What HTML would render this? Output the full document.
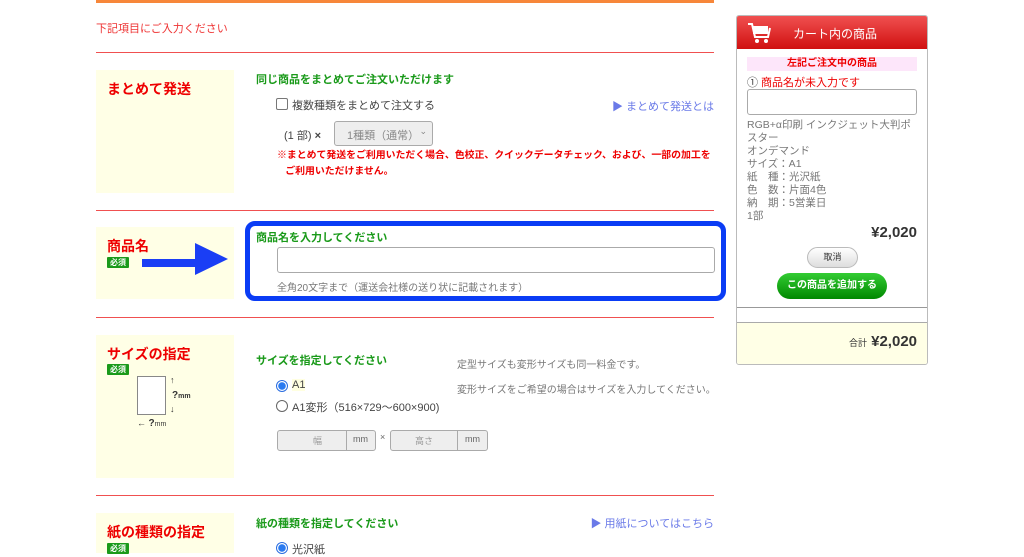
<!DOCTYPE html>
<html><head><meta charset="utf-8"><style>
*{margin:0;padding:0;box-sizing:border-box}
body{width:1024px;height:550px;overflow:hidden;background:#fff;position:relative;font-family:"Liberation Sans","Noto Sans CJK JP",sans-serif;color:#555}
.a{position:absolute;white-space:nowrap}
.hr{position:absolute;left:96px;width:618px;height:1px;background:#f05050}
.yb{position:absolute;left:96px;width:138px;background:#ffffe6}
.t{font-size:14px;font-weight:bold;color:#e00}
.g{font-size:11px;font-weight:bold;color:#1a9a1a}
.req{position:absolute;background:#1a9a1a;color:#fff;font-size:8px;font-weight:bold;padding:0 3px;height:11px;line-height:11px;border-radius:1px}
.s{font-size:11px;color:#444}
.lk{font-size:11px;color:#6a7ae8}
.rd{position:absolute;width:12px;height:12px;border-radius:50%;border:1px solid #666;background:#fff}
.rd.on{border:1px solid #2a6de0;background:radial-gradient(circle,#2a7af0 0 3.5px,#fff 4px)}
.inp{position:absolute;border:1px solid #aaa;border-radius:3px;background:#fff}
</style></head><body>
<div class="a" style="left:96px;top:0;width:618px;height:3px;background:#f7873a"></div>
<div class="a" style="left:96px;top:20px;font-size:11px;color:#e33">下記項目にご入力ください</div>
<div class="hr" style="top:52px"></div>

<div class="yb" style="top:70px;height:123px"></div>
<div class="a t" style="left:107px;top:79px">まとめて発送</div>
<div class="a g" style="left:256px;top:71px">同じ商品をまとめてご注文いただけます</div>
<div class="a" style="left:276px;top:98px;width:12px;height:12px;border:1px solid #777;border-radius:2px;background:#fff"></div>
<div class="a s" style="left:292px;top:97px">複数種類をまとめて注文する</div>
<div class="a lk" style="right:310px;top:98px">▶ まとめて発送とは</div>
<div class="a s" style="left:284px;top:127px">(1 部) <b>×</b></div>
<div class="a" style="left:334px;top:121px;width:99px;height:25px;border:1px solid #aaa;border-radius:3px;background:#eee;font-size:11px;color:#888;padding:5px 0 0 12px">1種類（通常）<span style="position:absolute;right:5px;top:4px;font-size:9px">⌄</span></div>
<div class="a" style="left:277px;top:148px;font-size:9.9px;font-weight:bold;color:#e00;line-height:16px">※まとめて発送をご利用いただく場合、色校正、クイックデータチェック、および、一部の加工を<br>&nbsp;&nbsp;&nbsp;ご利用いただけません。</div>
<div class="hr" style="top:210px"></div>

<div class="yb" style="top:227px;height:72px"></div>
<div class="a t" style="left:107px;top:236px">商品名</div>
<div class="req" style="left:107px;top:257px">必須</div>
<div class="a" style="left:142px;top:259px;width:55px;height:8px;background:#1a3ef5"></div>
<svg class="a" style="left:195px;top:243px" width="33" height="32"><polygon points="0,0 33,16 0,32" fill="#1a3ef5"/></svg>
<div class="a" style="left:245px;top:221px;width:481px;height:80px;border:5px solid #0a3cf5;border-radius:10px"></div>
<div class="a g" style="left:256px;top:229px">商品名を入力してください</div>
<div class="inp" style="left:277px;top:247px;width:438px;height:26px"></div>
<div class="a" style="left:277px;top:279px;font-size:10px;color:#777">全角20文字まで（運送会社様の送り状に記載されます）</div>
<div class="hr" style="top:317px"></div>

<div class="yb" style="top:335px;height:143px"></div>
<div class="a t" style="left:107px;top:344px">サイズの指定</div>
<div class="req" style="left:107px;top:364px">必須</div>
<div class="a" style="left:137px;top:376px;width:29px;height:39px;border:1px solid #888;background:#fff"></div>
<div class="a" style="left:170px;top:375px;font-size:9px;color:#333">↑</div>
<div class="a" style="left:172px;top:390px;font-size:10px;font-weight:bold;color:#333">?<span style="font-size:7px">mm</span></div>
<div class="a" style="left:170px;top:404px;font-size:9px;color:#333">↓</div>
<div class="a" style="left:137px;top:418px;font-size:9px;color:#333">← <b style="font-size:10px">?</b><span style="font-size:7px">mm</span></div>
<div class="a g" style="left:256px;top:352px">サイズを指定してください</div>
<div class="a" style="left:457px;top:356px;font-size:10px;color:#777">定型サイズも変形サイズも同一料金です。</div>
<div class="a" style="left:457px;top:381px;font-size:10px;color:#777">変形サイズをご希望の場合はサイズを入力してください。</div>
<div class="rd on" style="left:276px;top:380px"></div>
<div class="a s" style="left:292px;top:379px;background:#ffffe0">A1</div>
<div class="rd" style="left:276px;top:400px"></div>
<div class="a s" style="left:292px;top:399px">A1変形（516×729〜600×900)</div>
<div class="inp" style="left:277px;top:430px;width:99px;height:21px;background:#eee"></div>
<div class="a" style="left:346px;top:430px;width:1px;height:21px;background:#aaa"></div>
<div class="a" style="left:313px;top:434px;font-size:9px;color:#999">幅</div>
<div class="a" style="left:353px;top:434px;font-size:9px;color:#666">mm</div>
<div class="a" style="left:380px;top:432px;font-size:9px;color:#666">×</div>
<div class="inp" style="left:390px;top:430px;width:98px;height:21px;background:#eee"></div>
<div class="a" style="left:457px;top:430px;width:1px;height:21px;background:#aaa"></div>
<div class="a" style="left:415px;top:434px;font-size:9px;color:#999">高さ</div>
<div class="a" style="left:465px;top:434px;font-size:9px;color:#666">mm</div>
<div class="hr" style="top:495px"></div>

<div class="yb" style="top:513px;height:40px"></div>
<div class="a t" style="left:107px;top:522px">紙の種類の指定</div>
<div class="req" style="left:107px;top:543px">必須</div>
<div class="a g" style="left:256px;top:515px">紙の種類を指定してください</div>
<div class="a lk" style="right:310px;top:515px">▶ 用紙についてはこちら</div>
<div class="rd on" style="left:276px;top:542px"></div>
<div class="a s" style="left:292px;top:541px">光沢紙</div>

<!-- cart -->
<div class="a" style="left:736px;top:15px;width:192px;height:350px;border:1px solid #bbb;border-radius:3px;background:#fff;overflow:hidden">
 <div style="position:absolute;left:0;top:0;width:190px;height:33px;background:linear-gradient(#f05050,#d01010)"></div>
 <svg style="position:absolute;left:10px;top:5px" width="26" height="24" viewBox="0 0 26 24"><path d="M1 3h4l3 13h13l2-9" fill="none" stroke="#fff" stroke-width="2"/><rect x="6" y="5" width="15" height="8" fill="#fff"/><circle cx="10" cy="20" r="2" fill="#fff"/><circle cx="19" cy="20" r="2" fill="#fff"/></svg>
 <div style="position:absolute;left:56px;top:9px;color:#fff;font-size:12px">カート内の商品</div>
 <div style="position:absolute;left:10px;top:41px;width:170px;height:14px;background:#fde6fa;color:#e00;font-size:10px;font-weight:bold;text-align:center;line-height:14px">左記ご注文中の商品</div>
 <div style="position:absolute;left:10px;top:58px;font-size:11px;color:#e00"><span style="color:#444">①</span> 商品名が未入力です</div>
 <div style="position:absolute;left:10px;top:73px;width:170px;height:26px;border:1px solid #aaa;border-radius:3px"></div>
 <div style="position:absolute;left:10px;top:103px;font-size:10.5px;color:#777;line-height:13px">RGB+α印刷 インクジェット大判ポ<br>スター<br>オンデマンド<br>サイズ：A1<br>紙　種：光沢紙<br>色　数：片面4色<br>納　期：5営業日<br>1部</div>
 <div style="position:absolute;right:10px;top:208px;font-size:15px;font-weight:bold;color:#333">¥2,020</div>
 <div style="position:absolute;left:70px;top:231px;width:51px;height:21px;border:1px solid #bbb;border-radius:11px;background:linear-gradient(#fff,#ddd);font-size:9px;text-align:center;line-height:19px;color:#333">取消</div>
 <div style="position:absolute;left:40px;top:257px;width:110px;height:26px;border-radius:13px;background:linear-gradient(#3c3,#080);color:#fff;font-size:10px;font-weight:bold;text-align:center;line-height:26px">この商品を追加する</div>
 <div style="position:absolute;left:0;top:291px;width:190px;height:1px;background:#999"></div>
 <div style="position:absolute;left:0;top:306px;width:190px;height:44px;background:#ffffe6;border-top:1px solid #aaa"></div>
 <div style="position:absolute;right:10px;top:317px;font-size:15px;font-weight:bold;color:#333"><span style="font-size:9px;font-weight:normal">合計</span> ¥2,020</div>
</div>
</body></html>
